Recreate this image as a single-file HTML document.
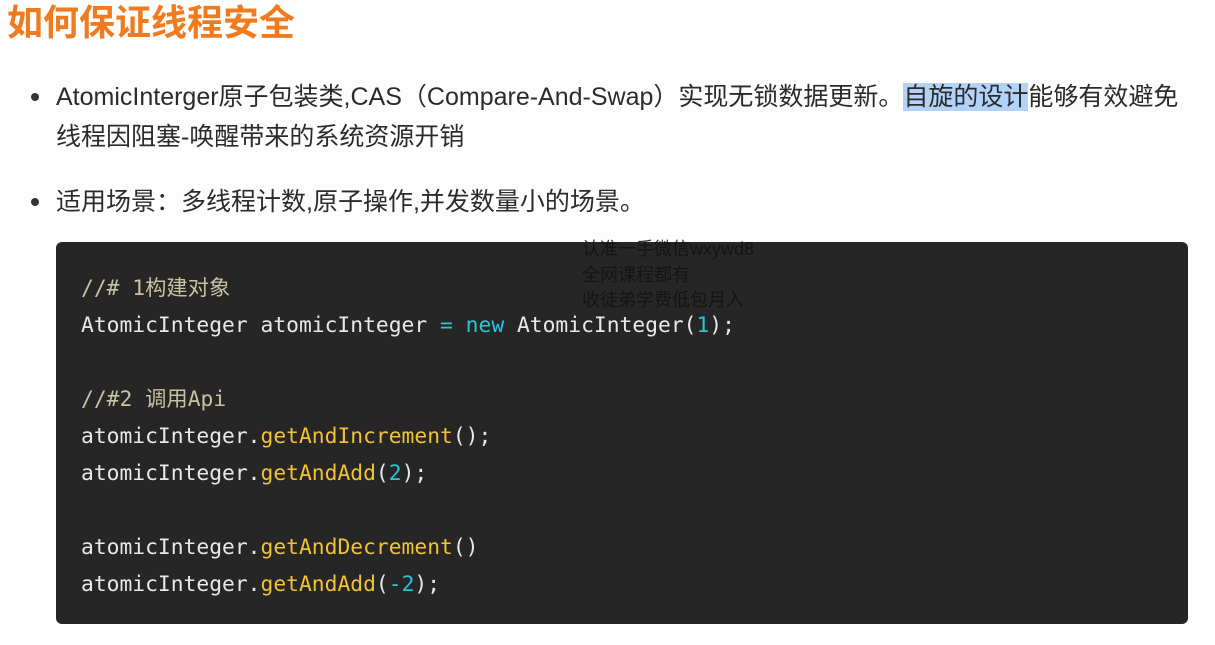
<!DOCTYPE html>
<html><head><meta charset="utf-8"><style>
html,body{margin:0;padding:0;background:#fdfdfd;width:1215px;height:645px;overflow:hidden;position:relative}
.t{position:absolute;left:7px;top:1px;font:bold 36px/44px "Liberation Sans","Noto Sans CJK SC",sans-serif;color:#ef7b1e;letter-spacing:0}
.p{position:absolute;left:56px;font:25px/40px "Liberation Sans","Noto Sans CJK SC",sans-serif;color:#2b2b2b;white-space:nowrap}
.dot{position:absolute;left:31px;width:8px;height:8px;border-radius:50%;background:#333}
.sel{background:#b3d2f8}
.code{position:absolute;left:56px;top:242px;width:1132px;height:382px;background:#262626;border-radius:6px}
pre{position:absolute;left:81px;top:270px;margin:0;font:21.3px/37px "DejaVu Sans Mono","Noto Sans CJK SC",monospace;color:#e8e8e8}
.c{color:#c9c2a0}.k{color:#29c6d6}.f{color:#f1c232}.n{color:#29c6d6}
.w{position:absolute;left:582px;top:237px;font:18px/25.5px "Liberation Sans","Noto Sans CJK SC",sans-serif;color:#111;opacity:.85}
</style></head><body>
<div class="t">如何保证线程安全</div>
<div class="dot" style="top:93px"></div>
<div class="p" style="top:77px">AtomicInterger原子包装类,CAS（Compare-And-Swap）实现无锁数据更新。<span class="sel">自旋的设计</span>能够有效避免</div>
<div class="p" style="top:117px">线程因阻塞-唤醒带来的系统资源开销</div>
<div class="dot" style="top:198px"></div>
<div class="p" style="top:182px">适用场景：多线程计数,原子操作,并发数量小的场景。</div>
<div class="code"></div>
<pre><span class="c">//# 1构建对象</span>
AtomicInteger atomicInteger <span class="k">=</span> <span class="k">new</span> AtomicInteger(<span class="n">1</span>);

<span class="c">//#2 调用Api</span>
atomicInteger.<span class="f">getAndIncrement</span>();
atomicInteger.<span class="f">getAndAdd</span>(<span class="n">2</span>);

atomicInteger.<span class="f">getAndDecrement</span>()
atomicInteger.<span class="f">getAndAdd</span>(<span class="n">-2</span>);</pre>
<div class="w">认准一手微信wxywd8<br>全网课程都有<br>收徒弟学费低包月入</div>
</body></html>
